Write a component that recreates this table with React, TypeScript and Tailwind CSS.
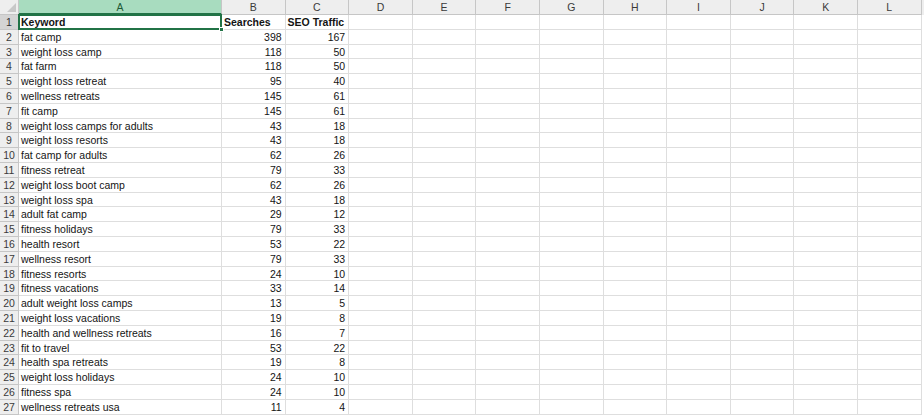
import React from "react";

const rows: [string, number, number][] = [
  ["fat camp", 398, 167],
  ["weight loss camp", 118, 50],
  ["fat farm", 118, 50],
  ["weight loss retreat", 95, 40],
  ["wellness retreats", 145, 61],
  ["fit camp", 145, 61],
  ["weight loss camps for adults", 43, 18],
  ["weight loss resorts", 43, 18],
  ["fat camp for adults", 62, 26],
  ["fitness retreat", 79, 33],
  ["weight loss boot camp", 62, 26],
  ["weight loss spa", 43, 18],
  ["adult fat camp", 29, 12],
  ["fitness holidays", 79, 33],
  ["health resort", 53, 22],
  ["wellness resort", 79, 33],
  ["fitness resorts", 24, 10],
  ["fitness vacations", 33, 14],
  ["adult weight loss camps", 13, 5],
  ["weight loss vacations", 19, 8],
  ["health and wellness retreats", 16, 7],
  ["fit to travel", 53, 22],
  ["health spa retreats", 19, 8],
  ["weight loss holidays", 24, 10],
  ["fitness spa", 24, 10],
  ["wellness retreats usa", 11, 4],
];

const emptyCols = ["D", "E", "F", "G", "H", "I", "J", "K", "L"];

export default function App() {
  return (
    <div
      className="w-[924px] h-[415px] overflow-hidden bg-white text-[#141414]"
      style={{ fontFamily: '"Liberation Sans", Arial, sans-serif' }}
    >
      {/* column headers */}
      <div className="flex h-[15px] bg-[#eeeeee] text-[10.5px] text-[#3a3a3a] leading-[14px]">
        <div className="w-[19px] shrink-0 border-r border-b border-[#c6c6c6] relative">
          <div className="absolute right-[2px] bottom-[2px] w-0 h-0 border-l-[9px] border-l-transparent border-b-[9px] border-b-[#c8c8c8]" />
        </div>
        <div className="w-[203px] shrink-0 text-center bg-[#a8dcbf] border-r border-[#c6c6c6] border-b-2 border-b-[#217346] text-[#1e5a36]">
          A
        </div>
        {["B", "C", ...emptyCols].map((c) => (
          <div
            key={c}
            className="w-[63.6px] shrink-0 text-center border-r border-b border-[#c6c6c6]"
          >
            {c}
          </div>
        ))}
      </div>

      {/* row 1 */}
      <div className="flex h-[14.8px] text-[10.5px] leading-[14px]">
        <div className="w-[19px] shrink-0 text-center bg-[#d4d4d4] text-[#333] border-r border-b border-[#c6c6c6]">
          1
        </div>
        <div className="w-[203px] shrink-0 relative border-r border-b border-[#dedede] pl-[2px] font-bold">
          Keyword
          <div className="absolute -left-[1px] -top-[1px] -right-[1px] -bottom-[1px] border-2 border-[#217346]" />
          <div className="absolute -right-[3px] -bottom-[3px] w-[5px] h-[5px] bg-[#217346] border border-white" />
        </div>
        <div className="w-[63.6px] shrink-0 border-r border-b border-[#dedede] pl-[2px] font-bold whitespace-nowrap">
          Searches
        </div>
        <div className="w-[63.6px] shrink-0 border-r border-b border-[#dedede] pl-[2px] font-bold whitespace-nowrap">
          SEO Traffic
        </div>
        {emptyCols.map((c) => (
          <div key={c} className="w-[63.6px] shrink-0 border-r border-b border-[#dedede]" />
        ))}
      </div>

      {rows.map(([kw, s, t], i) => (
        <div key={kw} className="flex h-[14.8px] text-[10.5px] leading-[14px]">
          <div className="w-[19px] shrink-0 text-center bg-[#eeeeee] text-[#3a3a3a] border-r border-b border-[#c6c6c6]">
            {i + 2}
          </div>
          <div className="w-[203px] shrink-0 border-r border-b border-[#dedede] pl-[2px] whitespace-nowrap">
            {kw}
          </div>
          <div className="w-[63.6px] shrink-0 border-r border-b border-[#dedede] pr-[3px] text-right">
            {s}
          </div>
          <div className="w-[63.6px] shrink-0 border-r border-b border-[#dedede] pr-[3px] text-right">
            {t}
          </div>
          {emptyCols.map((c) => (
            <div key={c} className="w-[63.6px] shrink-0 border-r border-b border-[#dedede]" />
          ))}
        </div>
      ))}
    </div>
  );
}
